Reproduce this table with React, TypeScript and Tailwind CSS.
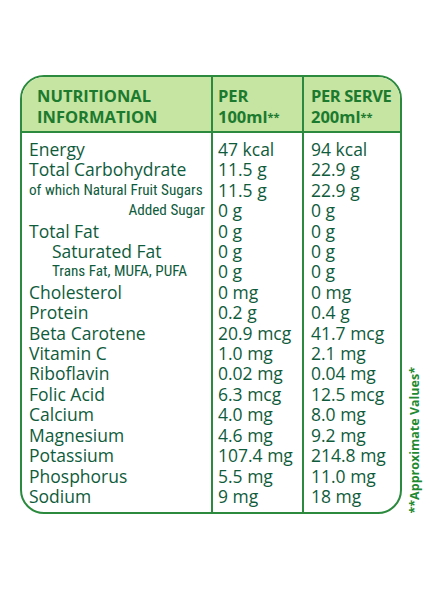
import React from "react";

type Kind = "n" | "sub" | "subR" | "ind" | "indSub";
const rows: [string, string, string, Kind][] = [
  ["Energy", "47 kcal", "94 kcal", "n"],
  ["Total Carbohydrate", "11.5 g", "22.9 g", "n"],
  ["of which Natural Fruit Sugars", "11.5 g", "22.9 g", "sub"],
  ["Added Sugar", "0 g", "0 g", "subR"],
  ["Total Fat", "0 g", "0 g", "n"],
  ["Saturated Fat", "0 g", "0 g", "ind"],
  ["Trans Fat, MUFA, PUFA", "0 g", "0 g", "indSub"],
  ["Cholesterol", "0 mg", "0 mg", "n"],
  ["Protein", "0.2 g", "0.4 g", "n"],
  ["Beta Carotene", "20.9 mcg", "41.7 mcg", "n"],
  ["Vitamin C", "1.0 mg", "2.1 mg", "n"],
  ["Riboflavin", "0.02 mg", "0.04 mg", "n"],
  ["Folic Acid", "6.3 mcg", "12.5 mcg", "n"],
  ["Calcium", "4.0 mg", "8.0 mg", "n"],
  ["Magnesium", "4.6 mg", "9.2 mg", "n"],
  ["Potassium", "107.4 mg", "214.8 mg", "n"],
  ["Phosphorus", "5.5 mg", "11.0 mg", "n"],
  ["Sodium", "9 mg", "18 mg", "n"],
];

const body = "font-['Open_Sans',sans-serif] text-[17.5px] leading-[20.4px] text-[#0f5c3c]";
const narrow = "font-['Liberation_Sans_Narrow','Roboto_Condensed',Roboto,sans-serif] text-[15.2px] leading-[20.4px] text-[#0f5c3c]";

function Label({ t, k }: { t: string; k: Kind }) {
  if (k === "n") return <div className={body + " whitespace-nowrap"}>{t}</div>;
  if (k === "ind") return <div className={body + " whitespace-nowrap pl-[23px]"}>{t}</div>;
  if (k === "sub") return <div className={narrow + " whitespace-nowrap"}>{t}</div>;
  if (k === "subR") return <div className={narrow + " whitespace-nowrap text-right pr-[6px]"}>{t}</div>;
  return <div className={narrow + " whitespace-nowrap pl-[23px]"}>{t}</div>;
}

const headTxt = "font-['Open_Sans',sans-serif] font-bold text-[16.5px] leading-[21px] text-[#1b7a2e]";

export default function App() {
  return (
    <div className="w-[442px] h-[590px] bg-white pt-[75px] pl-[20px]">
      <div className="flex items-stretch">
        <div className="w-[382px] border-2 border-[#2b8a3e] rounded-[24px] overflow-hidden flex bg-white">
          <div className="w-[189px] flex flex-col">
            <div className="h-[56px] bg-[#c6e4a2] border-b-2 border-[#2b8a3e] pl-[15px] pt-[8px]">
              <div className={headTxt}>NUTRITIONAL</div>
              <div className={headTxt}>INFORMATION</div>
            </div>
            <div className="pl-[7px] pt-[6px] pb-[6px]">
              {rows.map((r, i) => (
                <Label key={i} t={r[0]} k={r[3]} />
              ))}
            </div>
          </div>
          <div className="w-[91px] flex flex-col border-l-2 border-[#2b8a3e]">
            <div className="h-[56px] bg-[#c6e4a2] border-b-2 border-[#2b8a3e] pl-[5px] pt-[8px]">
              <div className={headTxt}>PER</div>
              <div className={headTxt}>
                100ml<span className="text-[11px] align-top">**</span>
              </div>
            </div>
            <div className="pl-[5px] pt-[6px]">
              {rows.map((r, i) => (
                <div key={i} className={body + " whitespace-nowrap"}>{r[1]}</div>
              ))}
            </div>
          </div>
          <div className="flex-1 flex flex-col border-l-2 border-[#2b8a3e]">
            <div className="h-[56px] bg-[#c6e4a2] border-b-2 border-[#2b8a3e] pl-[7px] pt-[8px]">
              <div className={headTxt + " tracking-[-0.4px]"}>PER SERVE</div>
              <div className={headTxt}>
                200ml<span className="text-[11px] align-top">**</span>
              </div>
            </div>
            <div className="pl-[7px] pt-[6px]">
              {rows.map((r, i) => (
                <div key={i} className={body + " whitespace-nowrap"}>{r[2]}</div>
              ))}
            </div>
          </div>
        </div>
        <div className="self-end mb-[1px] ml-[5px] [writing-mode:vertical-rl] rotate-180 font-['Open_Sans',sans-serif] font-bold text-[12.5px] leading-[15px] text-[#1f8a32] whitespace-nowrap">
          **Approximate Values*
        </div>
      </div>
    </div>
  );
}
